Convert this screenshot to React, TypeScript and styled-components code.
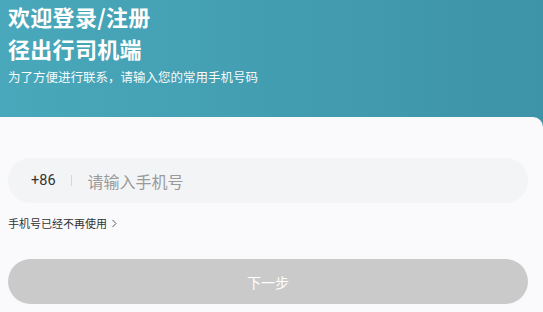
import styled, { createGlobalStyle } from "styled-components";

const GlobalStyle = createGlobalStyle`
  html, body {
    margin: 0;
    padding: 0;
    background: #fafafd;
  }
  body {
    font-family: "Noto Sans CJK SC", "Noto Sans", sans-serif;
    overflow: hidden;
  }
`;

const Page = styled.div`
  width: 543px;
  height: 312px;
  display: flex;
  flex-direction: column;
  background: linear-gradient(90deg, #49a8bb 0%, #3d93a7 100%);
`;

const Header = styled.header`
  height: 117px;
  padding: 0 8px;
  box-sizing: border-box;
  color: #fff;
`;

const Title = styled.h1`
  margin: 0;
  font-size: 22px;
  font-weight: 700;
  line-height: 32px;
  letter-spacing: 0.3px;
`;

const Subtitle = styled.p`
  margin: 0;
  padding-top: 3px;
  font-size: 12.5px;
  line-height: 20px;
  opacity: 0.95;
`;

const Panel = styled.main`
  flex: 1;
  background: #fafafd;
  border-top-right-radius: 10px;
  padding: 41px 15px 0 8px;
  display: flex;
  flex-direction: column;
`;

const PhoneField = styled.label`
  height: 45px;
  border-radius: 23px;
  background: #f3f4f5;
  display: flex;
  align-items: center;
  padding-left: 23px;
`;

const Prefix = styled.span`
  font-family: "Roboto", "Noto Sans", sans-serif;
  font-size: 14.5px;
  color: #333;
`;

const Divider = styled.span`
  width: 1px;
  height: 11px;
  background: #d6d6d6;
  margin: 0 16px 0 15px;
`;

const PhoneInput = styled.input`
  flex: 1;
  border: none;
  outline: none;
  background: transparent;
  font-family: "Noto Sans CJK SC", sans-serif;
  font-size: 16px;
  color: #333;
  padding: 0;
  &::placeholder {
    color: #9a9a9a;
  }
`;

const LinkRow = styled.a`
  margin-top: 12px;
  font-size: 11px;
  line-height: 16px;
  color: #333;
  display: flex;
  align-items: center;
  gap: 4px;
  text-decoration: none;
`;

const NextButton = styled.button`
  margin-top: 28px;
  height: 45px;
  border: none;
  border-radius: 23px;
  background: #cacaca;
  color: #fff;
  font-family: "Noto Sans CJK SC", sans-serif;
  font-size: 14px;
  padding: 0;
`;

export default function App() {
  return (
    <>
      <GlobalStyle />
      <Page>
        <Header>
          <Title>欢迎登录/注册</Title>
          <Title>径出行司机端</Title>
          <Subtitle>为了方便进行联系，请输入您的常用手机号码</Subtitle>
        </Header>
        <Panel>
          <PhoneField>
            <Prefix>+86</Prefix>
            <Divider />
            <PhoneInput placeholder="请输入手机号" />
          </PhoneField>
          <LinkRow>
            手机号已经不再使用
            <svg width="7" height="9" viewBox="0 0 7 9" fill="none">
              <path d="M1.5 1 L5 4.5 L1.5 8" stroke="#555" strokeWidth="1" />
            </svg>
          </LinkRow>
          <NextButton disabled>下一步</NextButton>
        </Panel>
      </Page>
    </>
  );
}
